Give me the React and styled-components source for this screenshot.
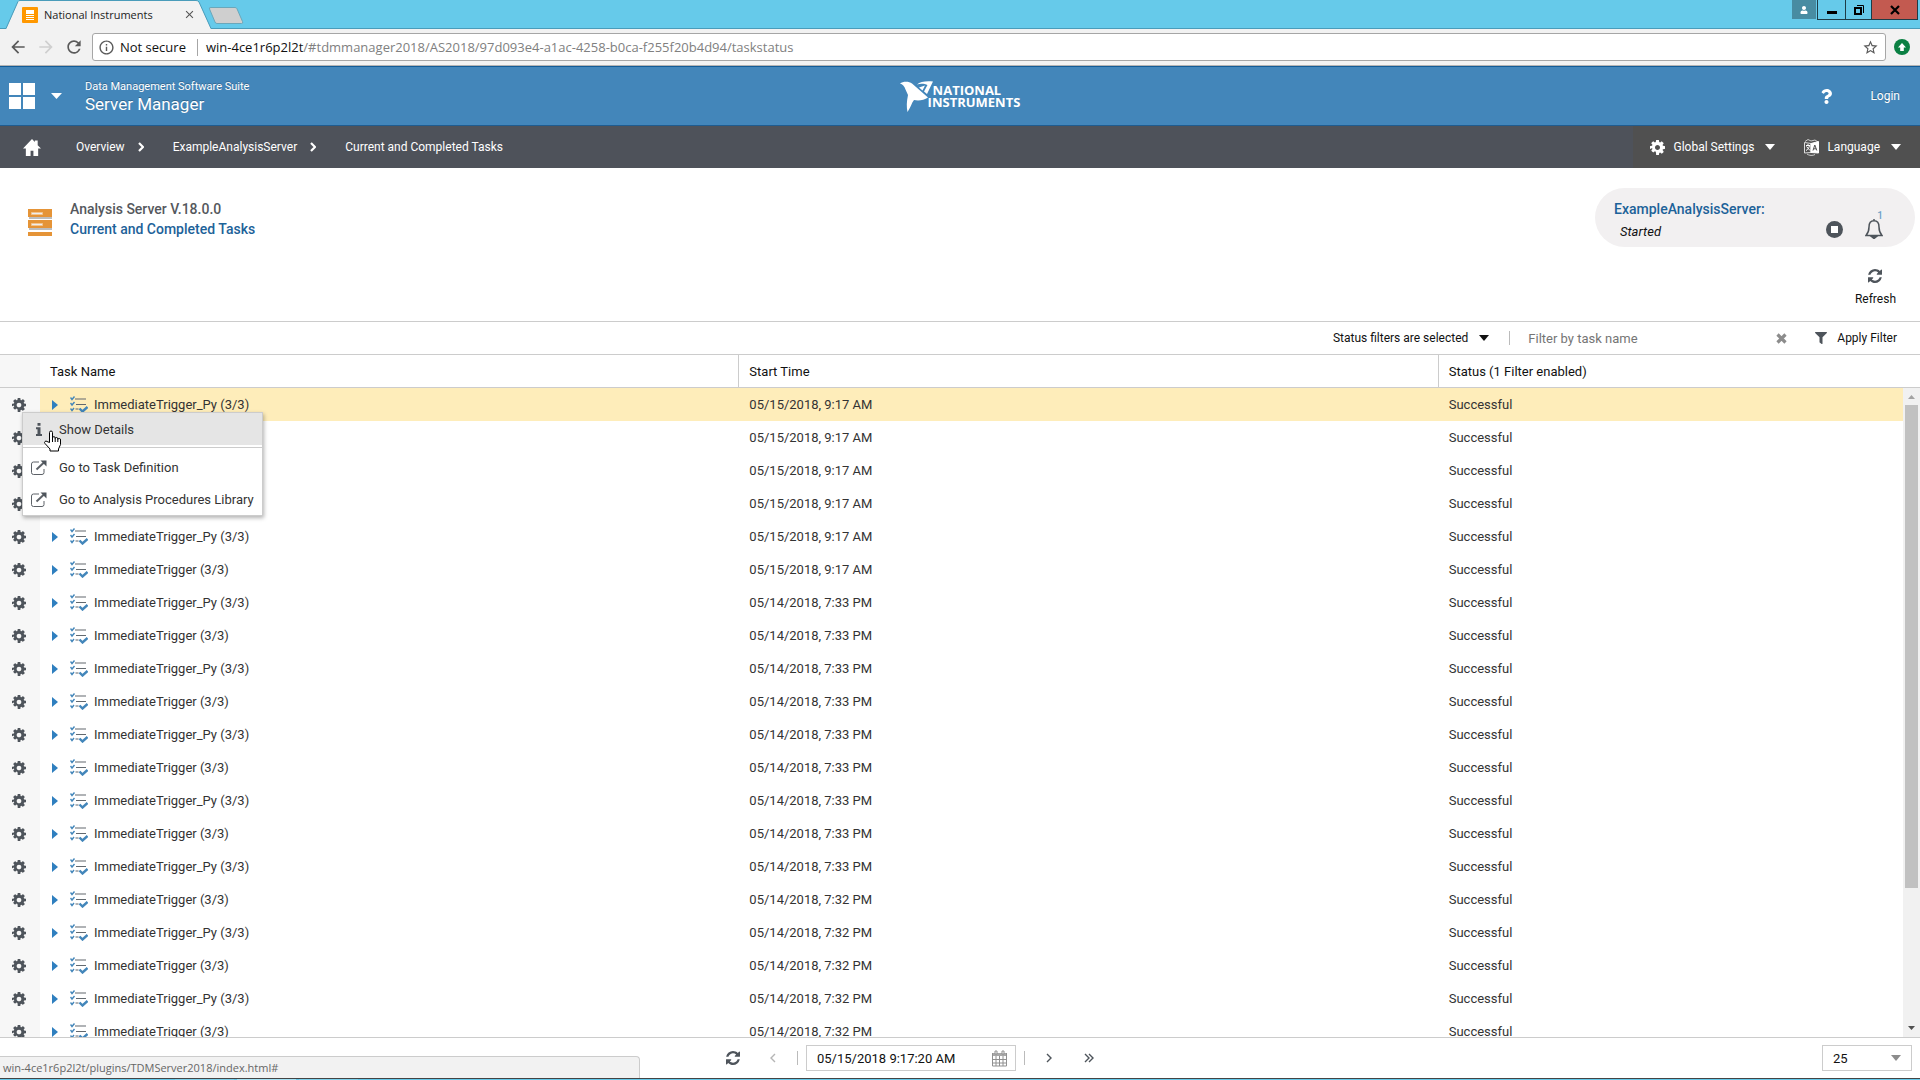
import React from 'react'
import styled, { createGlobalStyle, css } from 'styled-components'
import { FaFilter, FaQuestion, FaUser } from 'react-icons/fa'
import { MdArrowBack, MdArrowForward, MdRefresh, MdStarBorder, MdInfoOutline, MdClose } from 'react-icons/md'

const GlobalStyle = createGlobalStyle`
  * {
    box-sizing: border-box;
  }

  body {
    margin: 0;
    font-family: Roboto, "Liberation Sans", sans-serif;
    font-size: 13px;
    color: #111;
    background: #fff;
  }

  button, input, select {
    font: inherit;
    color: inherit;
    margin: 0;
    padding: 0;
    border: none;
    background: none;
  }

  a {
    color: inherit;
    text-decoration: none;
  }

  svg {
    display: block;
    flex-shrink: 0;
  }
`

const Screen = styled.div`
  position: relative;
  display: flex;
  flex-direction: column;
  height: 100vh;
  overflow: hidden;
`

/* browser chrome */

const TabStrip = styled.div`
  display: flex;
  align-items: flex-end;
  justify-content: space-between;
  height: 29px;
  background: #66caea;
  border-bottom: 1px solid #4a9cba;
`

const Tabs = styled.div`
  display: grid;
  grid-template-columns: 212px 36px;
  margin-bottom: -1px;
  padding-left: 5px;
`

const TabShape = styled.svg`
  grid-area: 1 / 1;
`

const NewTabShape = styled.svg`
  overflow: visible;
`

const Tab = styled.button`
  grid-area: 1 / 1;
  display: flex;
  align-items: center;
  gap: 6px;
  padding: 0 21px 0 17px;
  font-family: "Open Sans", "Noto Sans", sans-serif;
  font-size: 11px;
  color: #222;
  z-index: 1;
`

const TabTitle = styled.span`
  flex: 1;
  text-align: left;
  white-space: nowrap;
`

const WindowButtons = styled.div`
  display: flex;
  align-self: flex-start;
  padding-right: 2px;
`

const WindowButton = styled.button`
  display: flex;
  align-items: center;
  justify-content: center;
  width: ${props => props.$width}px;
  height: 20px;
  margin-left: -1px;
  border: 1px solid #1e3c46;
  border-top: none;
  background: ${props => props.$color || 'transparent'};
`

const ProfileButton = styled(WindowButton)`
  height: 19px;
  margin-right: 2px;
  border: none;
  color: #fff;
`

const Toolbar = styled.div`
  display: flex;
  align-items: center;
  gap: 8px;
  height: 37px;
  padding: 0 10px 0 8px;
  background: #f2f2f2;
  border-bottom: 1px solid #b4b4b4;
  color: #5a5a5a;
`

const ToolButton = styled.button`
  display: flex;
  color: ${props => props.$faded ? '#cfcfcf' : 'inherit'};
`

const AddressBar = styled.div`
  flex: 1;
  display: flex;
  align-items: center;
  height: 28px;
  padding: 0 6px 0 5px;
  border: 1px solid #a6a6a6;
  border-radius: 3px;
  background: #fff;
  font-family: "Open Sans", "Noto Sans", sans-serif;
  font-size: 13px;
  color: #111;
`

const Security = styled.span`
  display: flex;
  align-items: center;
  gap: 5px;
  margin-right: 8px;
  padding-right: 11px;
  border-right: 1px solid #a6a6a6;
  line-height: 16px;
`

const Url = styled.span`
  flex: 1;
  color: #808080;
`

const UrlHost = styled.span`
  color: #111;
`

/* application header */

const Header = styled.header`
  display: grid;
  grid-template-columns: 1fr auto 1fr;
  align-items: center;
  height: 60px;
  background: #4386ba;
  border-top: 1px solid #135c97;
  border-bottom: 1px solid #1f5c90;
  color: #fff;
  text-shadow: 0 -1px 0 rgba(0, 0, 0, 0.25);
`

const Brand = styled.div`
  display: flex;
  align-items: center;
  padding-left: 9px;
`

const Launcher = styled.button`
  display: flex;
  align-items: center;
  gap: 16px;
  margin-right: 23px;
`

const Product = styled.div`
  font-size: 11px;
  line-height: 16px;
`

const ProductName = styled.div`
  font-size: 17px;
  line-height: 19px;
`

const Logo = styled.div`
  display: flex;
  align-items: center;
`

const LogoText = styled.div`
  margin-left: -5px;
  font-family: "Open Sans", sans-serif;
  font-size: 13px;
  font-weight: 700;
  line-height: 12px;
  text-shadow: none;
`

const LogoLine = styled.div`
  padding-left: ${props => props.$indent ? 5 : 0}px;
`

const HeaderActions = styled.div`
  display: flex;
  align-items: center;
  justify-content: flex-end;
  gap: 36px;
  padding-right: 20px;
  font-size: 12px;
`

const NavBar = styled.nav`
  display: flex;
  justify-content: space-between;
  height: 42px;
  background: #4e525a;
  color: #fff;
  font-size: 12px;
`

const Crumbs = styled.div`
  display: flex;
  align-items: center;
  gap: 13px;
  padding-left: 23px;
`

const Crumb = styled.a`
  margin-left: ${props => props.$first ? 22 : 16}px;
`

const NavMenus = styled.div`
  display: flex;
  align-items: center;
  gap: 29px;
  padding: 0 19px 0 17px;
  background: #505050;
`

const NavMenu = styled.button`
  display: flex;
  align-items: center;
  gap: 8px;
`

const NavCaret = styled.span`
  padding-left: 3px;
`

/* page heading */

const PageHead = styled.section`
  display: flex;
  justify-content: space-between;
  height: 154px;
  border-bottom: 1px solid #ccc;
`

const Heading = styled.div`
  display: flex;
  gap: 18px;
  padding: 31px 0 0 28px;
  font-size: 14px;
  font-weight: 500;
  line-height: 20px;
`

const HeadingIcon = styled.div`
  padding-top: 10px;
`

const HeadingTitle = styled.div`
  color: #55585d;
`

const HeadingPage = styled.h1`
  margin: 0;
  font: inherit;
  color: #1d6299;
`

const HeadSide = styled.div`
  display: flex;
  flex-direction: column;
  align-items: flex-end;
  padding: 20px 5px 0 0;
`

const ServerPill = styled.div`
  display: flex;
  justify-content: space-between;
  align-items: flex-end;
  width: 320px;
  height: 59px;
  padding: 0 32px 4px 19px;
  border-radius: 30px;
  background: #f2f0f1;
`

const ServerName = styled.div`
  font-size: 14px;
  font-weight: 500;
  line-height: 24px;
  color: #1d6299;
`

const ServerState = styled.div`
  padding-left: 6px;
  font-style: italic;
  line-height: 22px;
`

const PillIcons = styled.div`
  display: flex;
  align-items: center;
  gap: 22px;
  padding-bottom: 4px;
`

const BellButton = styled.button`
  position: relative;
`

const BellCount = styled.span`
  position: absolute;
  top: -8px;
  right: 0;
  font-size: 10px;
  font-weight: 500;
  line-height: 10px;
  color: #6da0c8;
`

const RefreshButton = styled.button`
  display: flex;
  flex-direction: column;
  align-items: center;
  gap: 9px;
  margin: 22px 19px 0 0;
  font-size: 12px;
`

/* filter bar */

const FilterBar = styled.form`
  display: flex;
  align-items: center;
  justify-content: flex-end;
  height: 33px;
  padding-right: 23px;
  border-bottom: 1px solid #ccc;
`

const Divider = styled.span`
  width: 1px;
  height: 14px;
  background: #bbb;
`

const StatusFilter = styled.button`
  display: flex;
  align-items: center;
  gap: 11px;
  margin-right: 20px;
  font-size: 12px;
`

const NameFilter = styled.input`
  width: 248px;
  margin-left: 18px;
  outline: none;

  &::placeholder {
    color: #757575;
    opacity: 1;
  }
`

const ClearButton = styled.button`
  color: #8c8c8c;
`

const ApplyButton = styled.button`
  display: flex;
  align-items: center;
  gap: 10px;
  margin-left: 28px;
  font-size: 12px;
`

/* task table */

const TableArea = styled.main`
  position: relative;
  flex: 1;
  min-height: 0;
  display: grid;
  grid-template-columns: 1fr 17px;
  grid-template-rows: 100%;
`

const TableClip = styled.div`
  overflow: hidden;
`

const Table = styled.table`
  width: 100%;
  table-layout: fixed;
  border-collapse: separate;
  border-spacing: 0;
`

const HeadCell = styled.th`
  width: ${props => props.$width || 'auto'};
  height: 33px;
  padding: 0 10px;
  border-bottom: 1px solid #ccc;
  border-right: ${props => props.$ruled ? '1px solid #ccc' : 'none'};
  background: ${props => props.$tools ? '#f7f7f7' : '#fff'};
  font-weight: 400;
  text-align: left;
`

const Cell = styled.td`
  height: 33px;
  padding: 0 10px;
  color: #333;
`

const ToolsCell = styled(Cell)`
  padding: 0 0 0 12px;
  background: #f7f7f7;
`

const Row = styled.tr`
  ${props => props.$selected && css`
    ${Cell}:not(:first-child) {
      background: #feedba;
    }
  `}
`

const TaskName = styled.div`
  display: flex;
  align-items: center;
  gap: 6px;
`

const Expander = styled.button`
  padding: 0 6px 0 2px;
`

const IconButton = styled.button`
  display: block;
  color: #4e545b;
`

const Rail = styled.div`
  display: flex;
  flex-direction: column;
`

const RailHead = styled.div`
  height: 33px;
  border-bottom: 1px solid #ccc;
`

const RailTrack = styled.div`
  flex: 1;
  display: flex;
  flex-direction: column;
  align-items: center;
  padding: 7px 0;
  background: #f1f1f1;
`

const RailThumb = styled.div`
  width: 13px;
  height: 76%;
  margin: 6px 0 auto;
  background: #c1c1c1;
`

const Menu = styled.div`
  position: absolute;
  left: 22px;
  top: 57px;
  border: 1px solid #ccc;
  background: #fff;
  box-shadow: 1px 2px 4px rgba(0, 0, 0, 0.3);
`

const MenuItem = styled.a`
  display: flex;
  align-items: center;
  height: 32px;
  padding-right: 8px;
  color: #333;
  background: ${props => props.$active ? '#e5e5e5' : '#fff'};
`

const MenuIcon = styled.span`
  display: flex;
  justify-content: center;
  width: 32px;
  margin-right: 4px;
  color: #4e545b;
`

const MenuRule = styled.div`
  height: 1px;
  margin: 2px 0 3px;
  background: #ccc;
`

const Pointer = styled.svg`
  position: absolute;
  left: 44px;
  top: 75px;
`

/* pager */

const Footer = styled.footer`
  display: flex;
  align-items: center;
  height: 41px;
  padding-right: 8px;
  border-top: 1px solid #ccc;
`

const Pager = styled.div`
  flex: 1;
  display: flex;
  align-items: center;
  justify-content: center;
`

const PagerButton = styled.button`
  display: flex;
  justify-content: center;
  width: 40px;
  color: ${props => props.$faded ? '#b5b5b5' : '#4e545b'};
`

const PagerDivider = styled(Divider)`
  margin: 0 4px;
`

const DateBox = styled.div`
  display: flex;
  align-items: center;
  width: 210px;
  height: 26px;
  margin: 0 4px;
  padding: 0 8px 0 10px;
  border: 1px solid #ccc;
`

const DateInput = styled.input`
  flex: 1;
  min-width: 0;
  outline: none;
`

const PageSizeBox = styled.div`
  display: grid;
  grid-template-columns: 1fr 20px;
  align-items: center;
  width: 90px;
  height: 26px;
  border: 1px solid #ccc;
`

const PageSize = styled.select`
  grid-area: 1 / 1 / 2 / 3;
  height: 24px;
  padding-left: 10px;
  appearance: none;
  outline: none;
`

const PageSizeCaret = styled.span`
  grid-area: 1 / 2;
  pointer-events: none;
`

const StatusBubble = styled.div`
  position: absolute;
  left: 0;
  bottom: 2px;
  width: 640px;
  max-width: 34%;
  height: 22px;
  padding-left: 3px;
  border: 1px solid #ccc;
  border-width: 1px 1px 0 0;
  border-radius: 0 4px 0 0;
  background: #f2f2f2;
  font-family: "Open Sans", "Noto Sans", sans-serif;
  font-size: 11px;
  line-height: 21px;
  color: #666;
`

const Taskbar = styled.div`
  display: flex;
  height: 2px;
  padding-left: 175px;
  gap: 3px;
  border-top: 1px solid #444;
  background: #66caea;
`

const TaskbarItem = styled.div`
  width: 59px;
  background: ${props => props.$active ? '#a5e3f5' : '#7ed2ec'};
`

const Caret = ({ width = 11, height = 6, color = '#fff' }) => (
  <svg width={width} height={height} viewBox="0 0 11 6" preserveAspectRatio="none">
    <path d="M0 0h11L5.500 6z" fill={color} />
  </svg>
)

const Chevron = ({ double, flip, bold }) => (
  <svg
    width={double ? 10 : 6}
    height="10"
    viewBox={double ? '0 0 10 10' : '0 0 6 10'}
    fill="none"
    stroke="currentColor"
    strokeWidth={bold ? 2.2 : 1.4}
  >
    {flip ? <path d="M5 1L1 5l4 4" /> : <path d="M1 1l4 4-4 4" />}
    {double && <path d="M5 1l4 4-4 4" />}
  </svg>
)

const GearIcon = ({ size = 14 }) => (
  <svg width={size} height={size} viewBox="0 128 1536 1536" fill="currentColor">
    <path d="M1024 896q0-106-75-181t-181-75-181 75-75 181 75 181 181 75 181-75 75-181zm512-109v222q0 12-8 23t-20 13l-185 28q-19 54-39 91 35 50 107 138 10 12 10 25t-9 23q-27 37-99 108t-94 71q-12 0-26-9l-138-108q-44 23-91 38-16 136-29 186-7 28-36 28H657q-14 0-24.500-8.500T621 1506l-28-184q-49-16-90-37l-141 107q-10 9-25 9-14 0-25-11-126-114-165-168-7-10-7-23 0-12 8-23 15-21 51-66.500t54-70.500q-27-50-41-99L29 1041q-13-2-21-12.500T0 1005V783q0-12 8-23t19-13l186-28q14-46 39-92-40-57-107-138-10-12-10-24 0-10 9-23 26-36 98.500-107.500T337 263q13 0 26 10l138 107q44-23 91-38 16-136 29-186 7-28 36-28h222q14 0 24.500 8.500T915 158l28 184q49 16 90 37l142-107q9-9 24-9 13 0 25 10 129 119 165 170 7 8 7 22 0 12-8 23-15 21-51 66.500t-54 70.500q26 50 41 98l183 28q13 2 21 12.500t8 23.500z" />
  </svg>
)

const SyncIcon = () => (
  <svg width="14" height="14" viewBox="0 0 1536 1536" fill="#4e545b">
    <path d="M1511 928q0 5-1 7-64 268-268 434.500T764 1536q-146 0-282.500-55T238 1324l-129 129q-19 19-45 19t-45-19-19-45V960q0-26 19-45t45-19h448q26 0 45 19t19 45-19 45l-137 137q71 66 161 102t187 36q134 0 250-65t186-179q11-17 53-117 8-23 30-23h192q13 0 22.500 9.500t9.500 22.500zm25-800v448q0 26-19 45t-45 19h-448q-26 0-45-19t-19-45 19-45l138-138Q969 256 768 256q-134 0-250 65T332 500q-11 17-53 117-8 23-30 23H50q-13 0-22.500-9.500T18 608v-7q65-268 270-434.500T768 0q146 0 284 55.500T1297 212l130-129q19-19 45-19t45 19 19 45z" />
  </svg>
)

const DetailsIcon = () => (
  <svg width="6" height="13" viewBox="0 0 6 13" fill="currentColor">
    <path d="M1.500 0h3v2.800h-3zM0 4.200h4.500V11H6v2H0v-2h1.500V6.200H0z" />
  </svg>
)

const CrossIcon = () => (
  <svg width="11" height="11" viewBox="0 0 11 11" fill="none" stroke="currentColor" strokeWidth="3.200">
    <path d="M1.500 1.500l8 8M9.500 1.500l-8 8" />
  </svg>
)

const TilesIcon = () => (
  <svg width="26" height="26" viewBox="0 0 26 26" fill="#fff">
    <path d="M0 0h12v12H0zM14 0h12v12H14zM0 14h12v12H0zM14 14h12v12H14z" />
  </svg>
)

const HomeIcon = () => (
  <svg width="18" height="19" viewBox="0 0 19 19" fill="#fff">
    <path d="M9.500 0.500L0 10.500h3V18.500h5V13h3v5.500h5v-8h3L15.500 7V2h-3v1.800z" />
  </svg>
)

const EagleIcon = () => (
  <svg width="33" height="31" viewBox="0 0 33 31" fill="#fff">
    <path d="M0 2.500C3 0 9 0 12 2.500L28 16.500C24 19.500 18 19.800 14 19C11.500 22 10.500 27 7.500 31C6.500 26 6.500 21 8 14L5.500 8.500C4.500 5 2.500 3.500 0 2.500z" />
    <path d="M17 3.500C20 0.500 26 0 33 0.500L27 13L24 10.500L27.500 4C24.500 2.500 20 2.500 17 3.500z" />
    <path d="M19 6.500L25 4.500L22.500 9.500z" />
  </svg>
)

const ServerIcon = () => (
  <svg width="24" height="27" viewBox="0 0 24 27">
    <path d="M1 8h23v2H1zM1 19h23v2H1z" fill="#bdbdbd" />
    <path d="M0 0h24v8H0zM0 11h24v8H0zM0 23h24v4H0z" fill="#e59437" />
    <path d="M3.500 3.500h11v2h-11zM3.500 14.500h11v2h-11z" fill="#eee" stroke="#f3c48e" />
  </svg>
)

const LanguageIcon = () => (
  <svg width="15" height="17" viewBox="0 0 15 17" fill="none" stroke="#fff">
    <path d="M0.500 3.500L7 4.500v9L0.500 14z" stroke="#ddd" />
    <path d="M1 2.500L4 .5l3 1.500L11 1l3 2" stroke="#ccc" />
    <path d="M7 4.500l7.500-2V14L7 13.500z" fill="#fff" />
    <path d="M2 6.500h4M4 5v1.500M5.500 6.500C5 9 4 10.500 2 11.500M2.500 7.500L6 11.500" />
    <path d="M9 11.500l1.800-5.500 2 5.500M9.500 9.800h2.700" stroke="#505050" />
    <path d="M3 15c2 1.800 6 1.800 8 .5" stroke="#ccc" />
  </svg>
)

const StopIcon = () => (
  <svg width="17" height="17" viewBox="0 0 17 17">
    <circle cx="8.500" cy="8.500" r="8.500" fill="#4e545b" />
    <rect x="5" y="5" width="7" height="7" fill="#fff" />
  </svg>
)

const BellIcon = () => (
  <svg width="18" height="20" viewBox="0 0 18 20" fill="none" stroke="#4e545b" strokeWidth="1.500">
    <path d="M9 1.800c-4.500 0-5 3.500-5 6.200 0 4-1.200 6.500-3 8.500h16c-1.800-2-3-4.500-3-8.500 0-2.700-.5-6.200-5-6.200zM9 0v2" />
    <path d="M6.500 17.500h5L9 19.500z" fill="#4e545b" />
  </svg>
)

const ListIcon = () => (
  <svg width="18" height="17" viewBox="0 0 18 17" fill="none">
    <path d="M5 3h11M6 8.500h10M5.500 13h3" stroke="#62696f" strokeWidth="1.200" />
    <path d="M0.500 1.500l1.500 2L4.500.5M0.500 7l1.500 2 2.500-3M0.500 12.500l1.500 2 2-2.500" stroke="#4386ba" strokeWidth="1.400" />
    <path d="M9.500 12.500l3 3 5-4.500" stroke="#4386ba" strokeWidth="2.400" />
  </svg>
)

const ExternalIcon = () => (
  <svg width="16" height="15" viewBox="0 0 16 15" fill="none" stroke="#5c6167">
    <path d="M8 2H2.500a2 2 0 0 0-2 2v8.500a2 2 0 0 0 2 2H11a2 2 0 0 0 2-2V9" />
    <path d="M5.500 9.500L14 1.500" strokeWidth="2" />
    <path d="M9.500 0.500h6v6z" fill="#4e545b" stroke="none" />
  </svg>
)

const CalendarIcon = () => (
  <svg width="15" height="17" viewBox="0 0 15 17" fill="none" stroke="#909090">
    <path d="M0 3h15v3H0z" fill="#a8a8a8" stroke="none" />
    <path d="M0.500 3v13h14V3M0.500 9.500h14M0.500 13h14M4 6v10M7.500 6v10M11 6v10" />
    <path d="M3 1v3h2V1zM10 1v3h2V1z" fill="#fff" />
  </svg>
)

const tasks = Array.from({ length: 20 }, (_, i) => {
  const script = i % 2 === 0 ? 'ImmediateTrigger_Py' : 'ImmediateTrigger'
  let start = '05/14/2018, 7:32 PM'
  if (i < 6) start = '05/15/2018, 9:17 AM'
  else if (i < 15) start = '05/14/2018, 7:33 PM'
  return { id: i, name: `${script} (3/3)`, start, status: 'Successful' }
})

const BrowserFrame = () => (
  <>
    <TabStrip>
      <Tabs>
        <TabShape width="212" height="29" viewBox="0 0 212 29">
          <path d="M1 29L13 1.500Q13.500.5 15 .5H191Q193 .5 194 2L206 29z" fill="#f2f2f2" />
          <path d="M1 28.500L13 1.500Q13.500.5 15 .5H191Q193 .5 194 2L206 28.500" fill="none" stroke="#4a9cba" />
        </TabShape>
        <Tab>
          <svg width="16" height="16" viewBox="0 0 16 16">
            <rect width="16" height="16" rx="1" fill="#ff9800" />
            <path d="M4 3h8v4H4zM4 8h8v1H4zM4 10h8v1H4zM4 12h8v1H4z" fill="#fff" />
          </svg>
          <TabTitle>National Instruments</TabTitle>
          <MdClose size={13} color="#555" />
        </Tab>
        <NewTabShape width="36" height="29" viewBox="0 0 36 29">
          <path
            d="M-6 7.500Q-8.500 7.500-7.500 9L-2 22Q-1.500 23.500 0 23.500H24.500Q26.500 23.500 25.500 21.500L20 8.800Q19.500 7.500 18 7.500z"
            fill="#cfcfcf"
            stroke="#6aa7ba"
          />
        </NewTabShape>
      </Tabs>
      <WindowButtons>
        <ProfileButton $width={24} $color="#488ca2" aria-label="Profile"><FaUser size={8} /></ProfileButton>
        <WindowButton $width={29} aria-label="Minimize">
          <svg width="10" height="10"><path d="M0 6h10v3H0z" /></svg>
        </WindowButton>
        <WindowButton $width={27} aria-label="Restore">
          <svg width="10" height="10" viewBox="0 0 10 10" fill="none" stroke="#000">
            <path d="M1 3h6v6H1z" strokeWidth="2" />
            <path d="M3 .5h6.500V8" />
          </svg>
        </WindowButton>
        <WindowButton $width={47} $color="#c35a50" aria-label="Close">
          <svg width="10" height="10" viewBox="0 0 10 10" fill="none" stroke="#000" strokeWidth="2.200">
            <path d="M1 1l8 8M9 1L1 9" />
          </svg>
        </WindowButton>
      </WindowButtons>
    </TabStrip>
    <Toolbar>
      <ToolButton aria-label="Back"><MdArrowBack size={20} /></ToolButton>
      <ToolButton $faded aria-label="Forward"><MdArrowForward size={20} /></ToolButton>
      <ToolButton aria-label="Reload"><MdRefresh size={20} /></ToolButton>
      <AddressBar>
        <Security><MdInfoOutline size={17} color="#5a5a5a" />Not secure</Security>
        <Url>
          <UrlHost>win-4ce1r6p2l2t</UrlHost>/#tdmmanager2018/AS2018/97d093e4-a1ac-4258-b0ca-f255f20b4d94/taskstatus
        </Url>
        <ToolButton aria-label="Bookmark"><MdStarBorder size={17} color="#5a5a5a" /></ToolButton>
      </AddressBar>
      <ToolButton aria-label="Update">
        <svg width="16" height="16" viewBox="0 0 16 16">
          <circle cx="8" cy="8" r="8" fill="#0b8043" />
          <path d="M8 4l4 4.500H9.800V12H6.200V8.500H4z" fill="#fff" />
        </svg>
      </ToolButton>
    </Toolbar>
  </>
)

const AppHeader = () => (
  <>
    <Header>
      <Brand>
        <Launcher aria-label="Applications">
          <TilesIcon />
          <Caret />
        </Launcher>
        <div>
          <Product>Data Management Software Suite</Product>
          <ProductName>Server Manager</ProductName>
        </div>
      </Brand>
      <Logo>
        <EagleIcon />
        <LogoText>
          <LogoLine $indent>NATIONAL</LogoLine>
          <LogoLine>INSTRUMENTS</LogoLine>
        </LogoText>
      </Logo>
      <HeaderActions>
        <button aria-label="Help"><FaQuestion size={15} /></button>
        <a href="#login">Login</a>
      </HeaderActions>
    </Header>
    <NavBar>
      <Crumbs>
        <a href="#home" aria-label="Home"><HomeIcon /></a>
        <Crumb href="#overview" $first>Overview</Crumb>
        <Chevron bold />
        <Crumb href="#server">ExampleAnalysisServer</Crumb>
        <Chevron bold />
        <Crumb href="#tasks">Current and Completed Tasks</Crumb>
      </Crumbs>
      <NavMenus>
        <NavMenu>
          <GearIcon size={15} />
          Global Settings
          <NavCaret><Caret width={10} /></NavCaret>
        </NavMenu>
        <NavMenu>
          <LanguageIcon />
          Language
          <NavCaret><Caret width={10} /></NavCaret>
        </NavMenu>
      </NavMenus>
    </NavBar>
  </>
)

const PageHeading = () => (
  <PageHead>
    <Heading>
      <HeadingIcon><ServerIcon /></HeadingIcon>
      <div>
        <HeadingTitle>Analysis Server V.18.0.0</HeadingTitle>
        <HeadingPage>Current and Completed Tasks</HeadingPage>
      </div>
    </Heading>
    <HeadSide>
      <ServerPill>
        <div>
          <ServerName>ExampleAnalysisServer:</ServerName>
          <ServerState>Started</ServerState>
        </div>
        <PillIcons>
          <button aria-label="Stop server"><StopIcon /></button>
          <BellButton aria-label="Notifications">
            <BellIcon />
            <BellCount>1</BellCount>
          </BellButton>
        </PillIcons>
      </ServerPill>
      <RefreshButton>
        <SyncIcon />
        Refresh
      </RefreshButton>
    </HeadSide>
  </PageHead>
)

const Filters = () => {
  const [name, setName] = React.useState('')

  return (
    <FilterBar onSubmit={(event) => event.preventDefault()}>
      <StatusFilter type="button">
        Status filters are selected
        <Caret color="#111" width={10} />
      </StatusFilter>
      <Divider />
      <NameFilter
        type="text"
        aria-label="Filter by task name"
        placeholder="Filter by task name"
        value={name}
        onChange={(event) => setName(event.target.value)}
      />
      <ClearButton type="button" aria-label="Clear" onClick={() => setName('')}>
        <CrossIcon />
      </ClearButton>
      <ApplyButton type="submit">
        <FaFilter size={12} color="#4e545b" />
        Apply Filter
      </ApplyButton>
    </FilterBar>
  )
}

const TaskMenu = () => (
  <>
    <Menu>
      <MenuItem href="#details" $active>
        <MenuIcon><DetailsIcon /></MenuIcon>
        Show Details
      </MenuItem>
      <MenuRule />
      <MenuItem href="#definition">
        <MenuIcon><ExternalIcon /></MenuIcon>
        Go to Task Definition
      </MenuItem>
      <MenuItem href="#library">
        <MenuIcon><ExternalIcon /></MenuIcon>
        Go to Analysis Procedures Library
      </MenuItem>
    </Menu>
    <Pointer width="18" height="22" viewBox="0 0 18 22">
      <path
        d="M5.500 12.500V2.500a1.500 1.500 0 0 1 3 0V8a1.200 1.200 0 0 1 2.700 0v.6a1.200 1.200 0 0 1 2.600.4v.6a1.200 1.200 0 0 1 2.700.4v4.500L14.500 19v2h-8.500v-2L1 13.500a1.400 1.400 0 0 1 2-2z"
        fill="#fff"
        stroke="#000"
      />
      <path d="M8.500 8v4M11.200 8.500V12M13.800 9.500V12" stroke="#000" />
    </Pointer>
  </>
)

const TaskTable = () => (
  <TableArea>
    <TableClip>
      <Table>
        <thead>
          <tr>
            <HeadCell $width="40px" $tools aria-label="Actions" />
            <HeadCell $width="36.75%" $ruled>Task Name</HeadCell>
            <HeadCell $width="36.75%" $ruled>Start Time</HeadCell>
            <HeadCell>Status (1 Filter enabled)</HeadCell>
          </tr>
        </thead>
        <tbody>
          {tasks.map((task) => (
            <Row key={task.id} $selected={task.id === 0}>
              <ToolsCell>
                <IconButton aria-label="Task actions"><GearIcon /></IconButton>
              </ToolsCell>
              <Cell>
                <TaskName>
                  <Expander aria-label="Expand">
                    <svg width="6" height="10"><path d="M0 0l6 5-6 5z" fill="#2f7fbf" /></svg>
                  </Expander>
                  <ListIcon />
                  {task.name}
                </TaskName>
              </Cell>
              <Cell>{task.start}</Cell>
              <Cell>{task.status}</Cell>
            </Row>
          ))}
        </tbody>
      </Table>
    </TableClip>
    <Rail>
      <RailHead />
      <RailTrack>
        <svg width="7" height="4"><path d="M0 4h7L3.500 0z" fill="#a3a3a3" /></svg>
        <RailThumb />
        <svg width="7" height="4"><path d="M0 0h7L3.500 4z" fill="#505050" /></svg>
      </RailTrack>
    </Rail>
    <TaskMenu />
  </TableArea>
)

const TaskPager = () => {
  const [date, setDate] = React.useState('05/15/2018 9:17:20 AM')
  const [size, setSize] = React.useState('25')

  return (
    <Footer>
      <Pager>
        <PagerButton aria-label="Refresh"><SyncIcon /></PagerButton>
        <PagerButton $faded aria-label="Previous"><Chevron flip /></PagerButton>
        <PagerDivider />
        <DateBox>
          <DateInput
            type="text"
            aria-label="Tasks started before"
            value={date}
            onChange={(event) => setDate(event.target.value)}
          />
          <CalendarIcon />
        </DateBox>
        <PagerDivider />
        <PagerButton aria-label="Next"><Chevron /></PagerButton>
        <PagerButton aria-label="Last"><Chevron double /></PagerButton>
      </Pager>
      <PageSizeBox>
        <PageSize aria-label="Tasks per page" value={size} onChange={(event) => setSize(event.target.value)}>
          <option>25</option>
          <option>50</option>
          <option>100</option>
        </PageSize>
        <PageSizeCaret><Caret width={10} color="#8c8c8c" /></PageSizeCaret>
      </PageSizeBox>
    </Footer>
  )
}

const App = () => (
  <Screen>
    <GlobalStyle />
    <BrowserFrame />
    <AppHeader />
    <PageHeading />
    <Filters />
    <TaskTable />
    <TaskPager />
    <StatusBubble>win-4ce1r6p2l2t/plugins/TDMServer2018/index.html#</StatusBubble>
    <Taskbar>
      <TaskbarItem />
      <TaskbarItem $active />
      <TaskbarItem />
    </Taskbar>
  </Screen>
)

export default App
